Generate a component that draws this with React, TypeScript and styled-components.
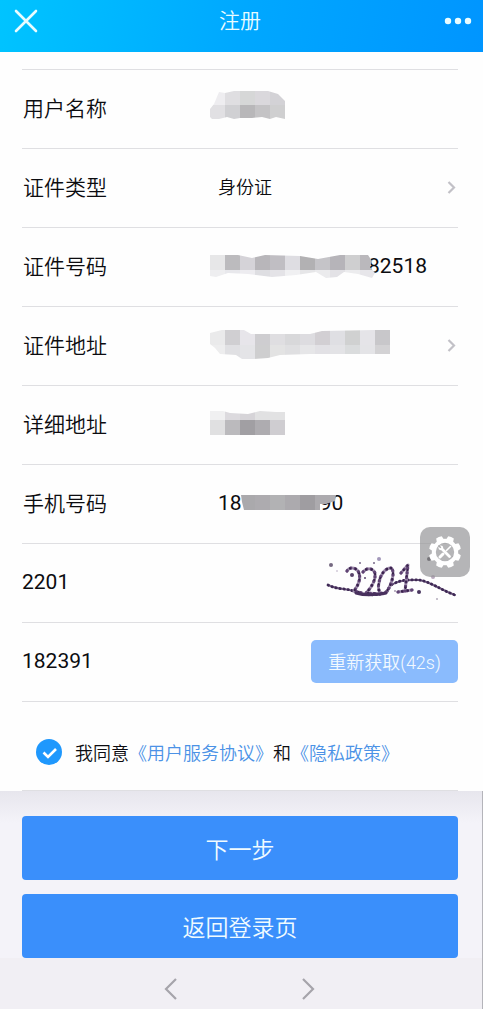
import React, { useId, useState } from "react";
import styled, { createGlobalStyle, css } from "styled-components";

const GlobalStyle = createGlobalStyle`
  * { box-sizing: border-box; }
  body {
    margin: 0;
    background: #f4f3f9;
    color: #0c0c10;
    font-family: Roboto, "Noto Sans CJK SC", sans-serif;
  }
  button, input, select {
    font: inherit;
    color: inherit;
    margin: 0;
    padding: 0;
    border: 0;
    background: none;
    border-radius: 0;
    outline-offset: 2px;
  }
  button { cursor: pointer; }
`;

const Page = styled.div`
  min-height: 100vh;
  display: flex;
  flex-direction: column;
`;

const Header = styled.header`
  height: 52px;
  padding: 0 11px 11px 12px;
  display: grid;
  grid-template-columns: 28px 1fr 32px;
  align-items: center;
  background: linear-gradient(100deg, #00c4ff 0%, #00a8ff 50%, #0095ff 100%);
  color: #e9fcff;
`;

const Title = styled.h1`
  margin: 0;
  text-align: center;
  font-size: 21px;
  line-height: 30px;
  font-weight: 350;
`;

const IconButton = styled.button`
  display: flex;
  align-items: center;
  justify-content: flex-end;
`;

const CloseIconButton = styled(IconButton)`
  justify-content: center;
`;

const Panel = styled.form`
  padding: 17px 25px 0 22px;
  background: #fefefe;
`;

const Rows = styled.div`
  border-top: 1px solid #dfdfe2;
`;

const rowLine = css`
  border-bottom: 1px solid #dfdfe2;
`;

const Row = styled.div`
  ${rowLine}
  position: relative;
  height: 79px;
  padding-bottom: 2px;
  display: flex;
  align-items: stretch;
  font-size: 21px;
`;

const Label = styled.label`
  width: 188px;
  padding: 0 0 2px 1px;
  display: flex;
  align-items: center;
  font-weight: 350;
`;

const Field = styled.div`
  position: relative;
  flex: 1;
  min-width: 0;
  display: flex;
  align-items: center;
`;

const TextInput = styled.input<{ $indent: number }>`
  flex: 1;
  min-width: 0;
  height: 100%;
  padding-left: ${(p) => p.$indent}px;
`;

const Select = styled.select`
  flex: 1;
  height: 100%;
  padding-left: 8px;
  appearance: none;
  font-size: 18px;
  font-weight: 350;
`;

const PickerButton = styled.button`
  flex: 1;
  height: 100%;
`;

const ChevronWrap = styled.span`
  display: flex;
  padding-right: 1px;
  color: #c2c1c7;
`;

const Overlay = styled.svg`
  position: absolute;
  left: 0;
  top: 0;
  pointer-events: none;
`;

const CodeButton = styled.button`
  align-self: center;
  width: 147px;
  height: 43px;
  border-radius: 5px;
  background: #8abbfd;
  color: #f2f9ff;
  font-size: 18px;
  font-weight: 350;
`;

const Captcha = styled.button`
  display: flex;
  padding-top: 11px;
`;

const ToolButton = styled.button`
  position: absolute;
  right: -12px;
  top: -17px;
  width: 50px;
  height: 50px;
  border-radius: 10px;
  background: rgba(150, 150, 152, 0.7);
  display: flex;
  align-items: center;
  justify-content: center;
`;

const Agreement = styled.div`
  ${rowLine}
  height: 89px;
  padding: 11px 0 0 14px;
  display: flex;
  align-items: center;
  gap: 13px;
  font-size: 18px;
  font-weight: 350;
`;

const CheckHolder = styled.span`
  position: relative;
  display: flex;
  width: 26px;
  height: 26px;
`;

const Checkbox = styled.input`
  appearance: none;
  width: 26px;
  height: 26px;
  border-radius: 50%;
  border: 1px solid #b9bcc4;
  cursor: pointer;
  &:checked {
    border: 0;
    background: #1f98fd;
  }
`;

const Link = styled.a`
  color: #4b92e6;
  text-decoration: none;
`;

const Actions = styled.div`
  flex: 1;
  padding: 25px 24px 0 22px;
  border-right: 1px solid #b4b4ba;
  display: flex;
  flex-direction: column;
  gap: 14px;
  background: linear-gradient(#e7e6ed 0, #f4f3f9 32px);
`;

const MainButton = styled.button`
  height: 64px;
  border-radius: 4px;
  background: #3a8ffb;
  color: #f0fbff;
  font-size: 23px;
  font-weight: 350;
`;

const Footer = styled.nav`
  height: 51px;
  padding: 10px 4px 0 0;
  border-right: 1px solid #b4b4ba;
  background: #f1eff4;
  display: flex;
  justify-content: center;
  align-items: center;
  gap: 113px;
  color: #a6a4ab;
`;

const NavButton = styled.button`
  display: flex;
  width: 24px;
  height: 24px;
`;

type MosaicProps = {
  outline: string;
  rows: { y: number; h: number; colors: string[] }[];
  start?: number;
};

/* Pixelated patch that hides private data; cells are 15px wide. */
function Mosaic({ outline, rows, start = 0 }: MosaicProps) {
  const id = useId();
  return (
    <Overlay width="250" height="78" viewBox="0 0 250 78" aria-hidden="true">
      <clipPath id={id}>
        <polygon points={outline} />
      </clipPath>
      <g clipPath={`url(#${id})`} shapeRendering="crispEdges">
        {rows.map((r) =>
          r.colors.map((c, i) => (
            <rect key={`${r.y}-${i}`} x={start + i * 15} y={r.y} width="15" height={r.h} fill={c} />
          ))
        )}
      </g>
    </Overlay>
  );
}

function RowChevron() {
  return (
    <ChevronWrap>
      <svg width="10" height="14" viewBox="0 0 10 14" fill="none" stroke="currentColor" strokeWidth="2.200">
        <path d="M1.500 2 7 7.500 1.500 13" />
      </svg>
    </ChevronWrap>
  );
}

const captchaLine =
  "M328 585C338 590 346 588 353 591C364 596 374 595 382 594C391 592 387 586 393 584C402 579 411 580 419 580C429 581 441 590 455 595";

const captchaDigits = [
  "M347 571C349 567 355 567 358 571C361 576 360 583 354 591L362 593",
  "M363 572C366 568 372 567 375 573C376 580 371 588 366 593L383 594",
  "M391 568C385 568 380 575 379 583C377 591 381 595 385 593C391 588 396 571 391 568Z",
  "M401 573L408 565L405 591M398 592L412 590",
];

const captchaDots: [number, number, number, string][] = [
  [331, 565, 2, "#756981"],
  [379, 559, 2, "#a298ba"],
  [360, 563, 1, "#776988"],
  [374, 563, 1, "#776988"],
  [352, 575, 2, "#58436a"],
  [365, 578, 1, "#58436a"],
  [419, 592, 2, "#49365f"],
  [429, 559, 2, "#302b35"],
  [454, 558, 2, "#77727a"],
  [433, 577, 2, "#b9a9bd"],
  [437, 599, 1, "#b3abbb"],
  [395, 591, 1, "#a79bb0"],
  [337, 571, 1, "#d2cad9"],
];

function CaptchaDrawing() {
  return (
    <svg width="134" height="50" viewBox="324 555 134 50" fill="none" strokeLinecap="round" strokeLinejoin="round">
      <path d={captchaLine} stroke="#7d6a8c" strokeWidth="2" />
      <path d={captchaLine} stroke="#3f2955" strokeWidth="2.800" strokeDasharray="0.5 3.6" />
      {captchaDigits.map((d) => (
        <g key={d}>
          <path d={d} stroke="#a595b1" strokeWidth="3" />
          <path d={d} stroke="#604474" strokeWidth="3.200" strokeDasharray="0.3 4.300" />
          <path d={d} stroke="#38224b" strokeWidth="2.200" strokeDasharray="0.2 5.700" strokeDashoffset="2" />
        </g>
      ))}
      <path d="M356 593C366 596 376 595 386 593" stroke="#48305d" strokeWidth="3" />
      {captchaDots.map(([x, y, r, c]) => (
        <circle key={`${x}-${y}`} cx={x} cy={y} r={r} fill={c} />
      ))}
    </svg>
  );
}

function GearTools() {
  return (
    <svg width="34" height="34" viewBox="0 0 34 34" fill="none">
      <circle cx="17" cy="17" r="11.200" stroke="#fff" strokeWidth="4" />
      {[0, 45, 90, 135, 180, 225, 270, 315].map((a) => (
        <path key={a} d="M13.200 5 14 1.200Q17 .3 20 1.200L20.800 5Z" fill="#fff" transform={`rotate(${a + 22.5} 17 17)`} />
      ))}
      <path d="M13 13 21.500 21.500" stroke="#fff" strokeWidth="2.800" strokeLinecap="round" />
      <circle cx="12.800" cy="12.800" r="2.400" fill="#fff" />
      <path d="M10.500 10.500 12.800 12.800" stroke="#a9a9ab" strokeWidth="1.600" />
      <path d="M22.500 11.500 18.500 15.500" stroke="#fff" strokeWidth="1.600" strokeLinecap="round" />
      <path d="M15 19 12 22" stroke="#fff" strokeWidth="3" strokeLinecap="round" />
    </svg>
  );
}

export default function App() {
  const [captcha, setCaptcha] = useState("2201");
  const [sms, setSms] = useState("182391");
  const [agreed, setAgreed] = useState(true);

  return (
    <Page>
      <GlobalStyle />
      <Header>
        <CloseIconButton type="button" aria-label="关闭">
          <svg width="24" height="24" viewBox="0 0 24 24" stroke="currentColor" strokeWidth="2.600" strokeLinecap="round">
            <path d="M2 2 22 22M22 2 2 22" />
          </svg>
        </CloseIconButton>
        <Title>注册</Title>
        <IconButton type="button" aria-label="更多">
          <svg width="28" height="8" viewBox="0 0 28 8" fill="currentColor">
            <circle cx="4" cy="4" r="3.200" />
            <circle cx="14" cy="4" r="3.200" />
            <circle cx="24" cy="4" r="3.200" />
          </svg>
        </IconButton>
      </Header>

      <Panel onSubmit={(e) => e.preventDefault()}>
        <Rows>
          <Row>
            <Label htmlFor="name">用户名称</Label>
            <Field>
              <TextInput id="name" $indent={8} />
              <Mosaic
                outline="0,39 4,34 9,22 15,23 24,21 58,21 68,24 75,31 75,49 66,47 60,49 52,47 42,48 30,48 24,49 17,47 9,49 2,49 0,47"
                rows={[
                  { y: 21, h: 14, colors: ["#eeedf0", "#dfdee1", "#d6d7d7", "#dad8dc", "#d3d2d6"] },
                  { y: 35, h: 14, colors: ["#e1e0e3", "#d0d0d3", "#b8b7b9", "#c4c3c5", "#cfcfd0"] },
                ]}
              />
            </Field>
          </Row>
          <Row>
            <Label htmlFor="type">证件类型</Label>
            <Field>
              <Select id="type">
                <option>身份证</option>
              </Select>
              <RowChevron />
            </Field>
          </Row>
          <Row>
            <Label htmlFor="number">证件号码</Label>
            <Field>
              <TextInput id="number" $indent={158} defaultValue="82518" />
              <Mosaic
                outline="0,27 28,27 42,30 55,27 90,28 108,31 130,27 158,27 162,33 160,39 165,45 162,50 148,46 134,44 127,49 116,50 106,44 86,47 62,49 38,46 18,45 6,49 0,48"
                rows={[
                  { y: 27, h: 15, colors: ["#e7e7e8", "#bcbbbe", "#d5d3d8", "#b8b6ba", "#c0bec3", "#dedde2", "#b2b1b3", "#c5c4c8", "#b6b4b9", "#cfcfd0", "#bab8bc"] },
                  { y: 42, h: 9, colors: ["#eeeef0", "#e8e8ec", "#edecf0", "#dedee2", "#e4e3e7", "#f0f0f2", "#e6e6e8", "#ebebed", "#e3e2e6", "#ececee", "#e7e6ea"] },
                ]}
              />
            </Field>
          </Row>
          <Row>
            <Label htmlFor="address">证件地址</Label>
            <Field>
              <PickerButton id="address" type="button" aria-label="选择证件地址" />
              <Mosaic
                outline="0,26 12,23 34,23 41,27 100,27 112,24 165,23 180,23 180,47 100,47 70,48 58,51 44,52 32,52 26,48 10,47 5,41 0,37"
                rows={[
                  { y: 23, h: 15, colors: ["#eaeaeb", "#d0cfd2", "#e7e5ea", "#cecdd0", "#dfdee1", "#d8d8da", "#dddce0", "#d2cfd3", "#dfdfe3", "#d0d1d1", "#e5e4e8", "#c8c7ca"] },
                  { y: 38, h: 14, colors: ["#ededee", "#e0e0e3", "#e4e4e7", "#cececf", "#e3e3e3", "#dfdfe1", "#e6e6e8", "#e2e1e5", "#e3e3e6", "#dadcdd", "#e4e4e7", "#d3d2d4"] },
                ]}
              />
              <RowChevron />
            </Field>
          </Row>
          <Row>
            <Label htmlFor="detail">详细地址</Label>
            <Field>
              <TextInput id="detail" $indent={8} />
              <Mosaic
                outline="0,25 13,25 20,27 38,28 50,25 66,26 75,26 75,49 0,49"
                rows={[
                  { y: 25, h: 9, colors: ["#f0f0f1", "#dcdade", "#d6d4d8", "#e1e1e2", "#e2e2e3"] },
                  { y: 34, h: 15, colors: ["#e0e0e1", "#bbbabd", "#a19fa3", "#aeacb0", "#cfcdd1"] },
                ]}
              />
            </Field>
          </Row>
          <Row>
            <Label htmlFor="phone">手机号码</Label>
            <Field>
              <TextInput id="phone" $indent={8} defaultValue={"18" + "\u00a0".repeat(15) + "90"} />
              <Mosaic
                start={30}
                outline="31,30 126,30 125,36 116,39 110,39 110,45 34,45 32,37"
                rows={[
                  { y: 30, h: 15, colors: ["#aaa9ac", "#adabaf", "#b2b2b4", "#acaaae", "#9f9da1", "#acaaae", "#b0aeb2"] },
                ]}
              />
            </Field>
          </Row>
          <Row>
            <TextInput aria-label="图形验证码" $indent={0} value={captcha} onChange={(e) => setCaptcha(e.target.value)} />
            <Captcha type="button" aria-label="刷新图形验证码">
              <CaptchaDrawing />
            </Captcha>
            <ToolButton type="button" aria-label="工具">
              <GearTools />
            </ToolButton>
          </Row>
          <Row>
            <TextInput aria-label="短信验证码" $indent={0} value={sms} onChange={(e) => setSms(e.target.value)} />
            <CodeButton type="button">重新获取(42s)</CodeButton>
          </Row>
          <Agreement>
            <CheckHolder>
              <Checkbox id="agree" type="checkbox" checked={agreed} onChange={(e) => setAgreed(e.target.checked)} />
              {agreed && (
                <Overlay width="26" height="26" viewBox="0 0 26 26" fill="none" stroke="#fff" strokeWidth="2.600">
                  <path d="M7.500 13.500 12 18 20 10" />
                </Overlay>
              )}
            </CheckHolder>
            <span>
              <label htmlFor="agree">我同意</label>
              <Link href="#terms">《用户服务协议》</Link>和<Link href="#privacy">《隐私政策》</Link>
            </span>
          </Agreement>
        </Rows>
      </Panel>

      <Actions>
        <MainButton type="button">下一步</MainButton>
        <MainButton type="button">返回登录页</MainButton>
      </Actions>

      <Footer>
        <NavButton type="button" aria-label="后退">
          <svg width="24" height="24" viewBox="0 0 24 24" fill="none" stroke="currentColor" strokeWidth="2.200">
            <path d="M17 2 7 12 17 22" />
          </svg>
        </NavButton>
        <NavButton type="button" aria-label="前进">
          <svg width="24" height="24" viewBox="0 0 24 24" fill="none" stroke="currentColor" strokeWidth="2.200">
            <path d="M7 2 17 12 7 22" />
          </svg>
        </NavButton>
      </Footer>
    </Page>
  );
}
